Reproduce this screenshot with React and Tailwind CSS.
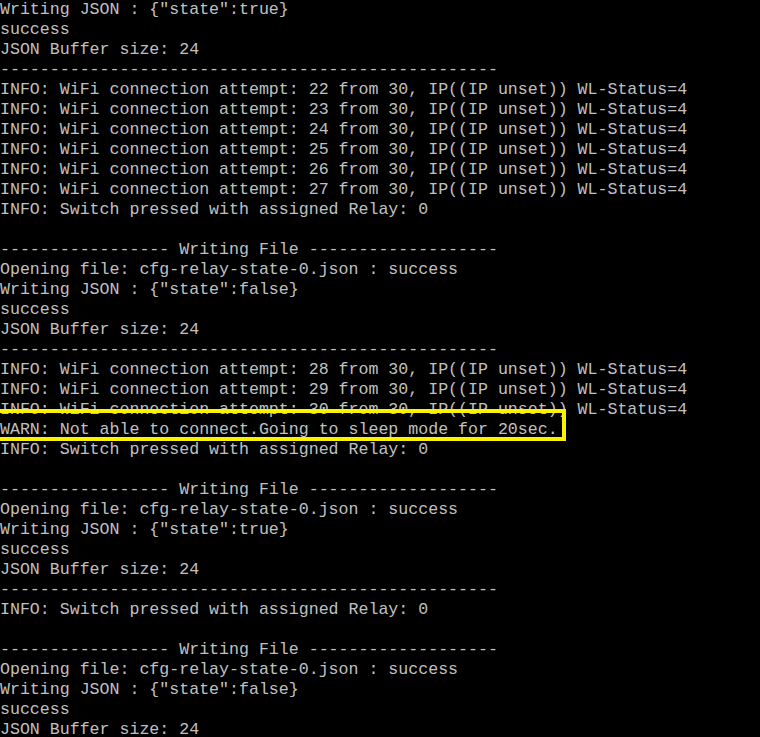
const sep = '--------------------------------------------------';
const header = '----------------- Writing File -------------------';

const wifi = (n) => `INFO: WiFi connection attempt: ${n} from 30, IP((IP unset)) WL-Status=4`;
const relay = 'INFO: Switch pressed with assigned Relay: 0';
const opening = 'Opening file: cfg-relay-state-0.json : success';

const lines = [
  'Writing JSON : {"state":true}',
  'success',
  'JSON Buffer size: 24',
  sep,
  wifi(22),
  wifi(23),
  wifi(24),
  wifi(25),
  wifi(26),
  wifi(27),
  relay,
  '',
  header,
  opening,
  'Writing JSON : {"state":false}',
  'success',
  'JSON Buffer size: 24',
  sep,
  wifi(28),
  wifi(29),
  wifi(30),
  'WARN: Not able to connect.Going to sleep mode for 20sec.',
  relay,
  '',
  header,
  opening,
  'Writing JSON : {"state":true}',
  'success',
  'JSON Buffer size: 24',
  sep,
  relay,
  '',
  header,
  opening,
  'Writing JSON : {"state":false}',
  'success',
  'JSON Buffer size: 24',
];

export default function App() {
  return (
    <div className="relative w-[760px] h-[737px] overflow-hidden bg-black">
      <div className="flex flex-col text-[16.6px] leading-[20px] text-[#c0c0c0] font-['Liberation_Mono','Courier_New',monospace] whitespace-pre">
        {lines.map((line, i) => (
          <div key={i} className="h-[20px] shrink-0">{line}</div>
        ))}
      </div>
      {/* highlight box drawn over the WARN line */}
      <div className="absolute left-[-6px] top-[409px] w-[572px] h-[32px] border-4 border-[#fbf200]" />
    </div>
  );
}
